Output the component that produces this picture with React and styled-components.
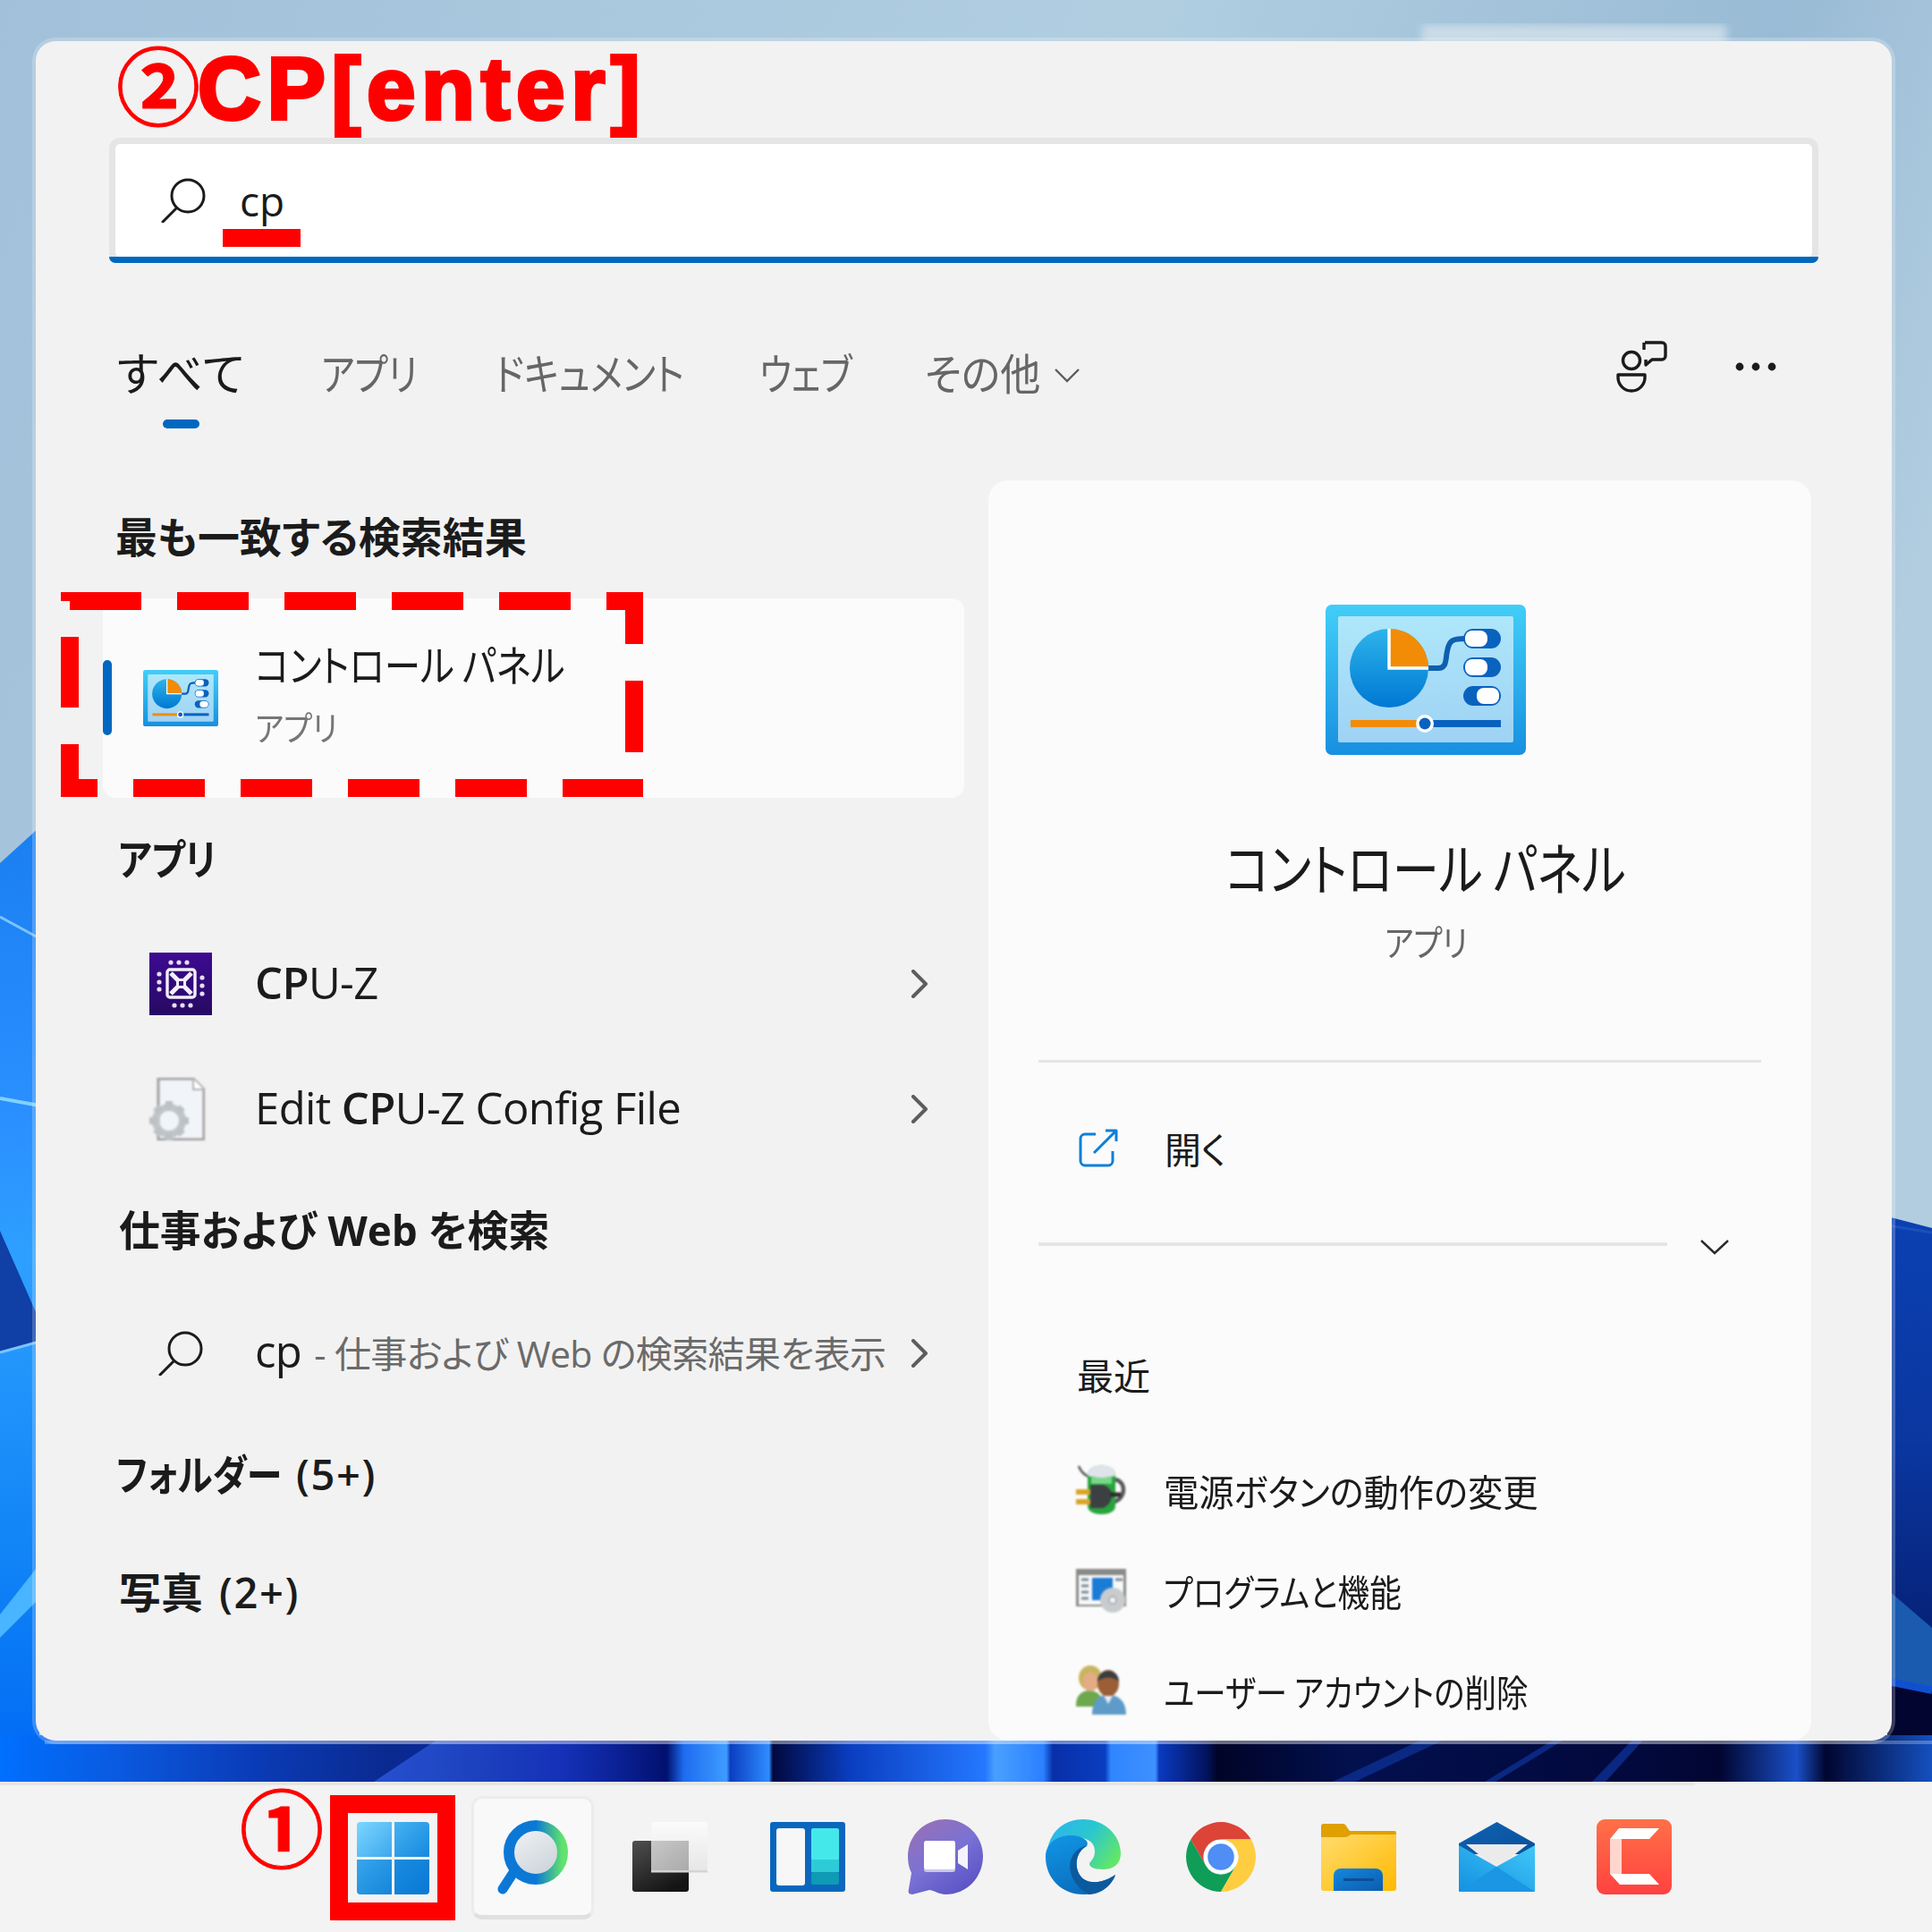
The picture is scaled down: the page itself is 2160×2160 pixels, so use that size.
import React from 'react';
import styled, { createGlobalStyle } from 'styled-components';

const sans = `"Open Sans", "Noto Sans CJK JP", sans-serif`;
const jp = `"Noto Sans CJK JP", sans-serif`;

const GlobalStyle = createGlobalStyle`
  html, body {
    margin: 0;
    padding: 0;
    background: #f3f3f3;
  }
  * {
    box-sizing: border-box;
  }
`;

const Desktop = styled.div`
  position: relative;
  width: 2160px;
  height: 2160px;
  overflow: hidden;
  font-family: ${sans};
  font-feature-settings: "palt";
  color: #1b1b1b;
`;

const WallpaperSvg = styled.svg`
  position: absolute;
  left: 0;
  top: 0;
`;

const Workspace = styled.div`
  position: relative;
  height: 1992px;
  padding: 46px 0 46px 40px;
`;

const Panel = styled.div`
  width: 2075px;
  height: 1900px;
  background: #f2f2f2;
  border-radius: 22px;
  box-shadow: 0 0 0 4px rgba(255, 255, 255, 0.22);
  display: flex;
  flex-direction: column;
`;

/* Yu Gothic UI kana are much narrower than Noto's, so labels get squeezed */
const Narrow = styled.span`
  display: inline-block;
  white-space: nowrap;
  width: ${(p) => (p.$w ? `${p.$w}px` : 'auto')};
  transform: scaleX(${(p) => p.$x});
  transform-origin: ${(p) => p.$origin || 'left'} center;
`;

const Instruction = styled.div`
  height: 108px;
  padding-left: 90px;
  line-height: 92px;
  color: #ff0000;
  white-space: nowrap;
  font-family: "Liberation Sans", ${jp};
  font-weight: 700;
  font-size: 98px;
  letter-spacing: 6.7px;
  -webkit-text-stroke: 4px #ff0000;
  font-feature-settings: normal;
`;

const Circled = styled.span`
  font-family: ${jp};
  font-size: 94px;
  letter-spacing: -3px;
  -webkit-text-stroke: 1px #ff0000;
`;

const SearchBox = styled.div`
  position: relative;
  margin-left: 82px;
  width: 1911px;
  height: 140px;
  flex: none;
  background: #fff;
  border: 7px solid #e5e5e5;
  border-bottom-color: transparent;
  background-clip: padding-box;
  border-radius: 12px;
  display: flex;
  align-items: center;
  padding-left: 51px;
  gap: 38px;

  &::after {
    content: '';
    position: absolute;
    left: -7px;
    right: -7px;
    bottom: -7px;
    height: 7px;
    background: #0067c0;
    border-radius: 0 0 8px 8px;
  }
`;

const QueryText = styled.span`
  font-size: 46px;
  line-height: 60px;
`;

const QueryMark = styled.div`
  position: absolute;
  left: 120px;
  top: 95px;
  width: 87px;
  height: 20px;
  background: #ff0000;
`;

const TabBar = styled.div`
  height: 243px;
  flex: none;
  padding: 90px 0 0 88px;
  display: flex;
  align-items: flex-start;
  gap: 85px;
`;

const Tab = styled.div`
  position: relative;
  width: ${(p) => p.$w}px;
  flex: none;
  font-family: ${jp};
  font-size: ${(p) => (p.$active ? 51 : 48)}px;
  line-height: 62px;
  font-weight: 400;
  font-feature-settings: ${(p) => (p.$active ? 'normal' : '"palt"')};
  color: ${(p) => (p.$active ? '#1b1b1b' : '#666666')};
  display: flex;
  align-items: center;
  white-space: nowrap;

  &::after {
    content: '';
    display: ${(p) => (p.$active ? 'block' : 'none')};
    position: absolute;
    left: 54px;
    top: 85px;
    width: 41px;
    height: 10px;
    border-radius: 5px;
    background: #0067c0;
  }
`;

const TabCaret = styled.span`
  display: flex;
  margin: 10px 0 0 20px;
`;

const TabTools = styled.div`
  margin-left: auto;
  margin-right: 129px;
  margin-top: -3px;
  display: flex;
  align-items: center;
  gap: 76px;
`;

const Columns = styled.div`
  flex: 1;
  min-height: 0;
  display: flex;
`;

const ResultsColumn = styled.div`
  width: 1065px;
  flex: none;
  padding-top: 18px;
`;

const SectionHeading = styled.div`
  height: 90px;
  margin-top: ${(p) => p.$top || 0}px;
  padding-left: ${(p) => p.$left || 90}px;
  font-size: 47px;
  line-height: 90px;
  font-weight: 700;
  color: #1b1b1b;
  white-space: nowrap;
`;

const Count = styled.span`
  margin-left: ${(p) => p.$gap}px;
  font-weight: 600;
  letter-spacing: 1.6px;
`;

const BestMatch = styled.div`
  position: relative;
  margin: 24px 0 0 75px;
  width: 963px;
  height: 223px;
  background: #fbfbfb;
  border-radius: 14px;
  display: flex;
  align-items: center;
`;

const Accent = styled.div`
  width: 10px;
  height: 84px;
  border-radius: 5px;
  background: #0067c0;
  margin-top: -1px;
`;

const BestIcon = styled.div`
  width: 84px;
  height: 63px;
  margin: 0 41px 0 35px;
  display: flex;
`;

const BestText = styled.div`
  display: flex;
  flex-direction: column;
  margin-top: -11px;
`;

const BestTitle = styled.div`
  font-family: ${jp};
  font-size: 48px;
  line-height: 66px;
  font-weight: 400;
  color: #1b1b1b;
  white-space: nowrap;
`;

const BestKind = styled.div`
  margin-top: 8px;
  font-family: ${jp};
  font-size: 38px;
  line-height: 60px;
  font-weight: 400;
  color: #767676;
`;

const DashedFrame = styled.svg`
  position: absolute;
  left: -47px;
  top: -7px;
`;

const RowList = styled.div`
  margin-top: ${(p) => p.$top || 0}px;
  display: flex;
  flex-direction: column;
`;

const ResultRow = styled.div`
  height: 140px;
  display: flex;
  align-items: center;
  padding-left: ${(p) => p.$indent || 127}px;
`;

const RowIcon = styled.div`
  width: ${(p) => p.$width || 118}px;
  flex: none;
  display: flex;
`;

const RowText = styled.div`
  width: 733px;
  flex: none;
  margin-top: -4px;
  font-size: 49px;
  line-height: 60px;
  font-weight: 400;
  letter-spacing: -0.6px;
  white-space: nowrap;
`;

const Match = styled.span`
  font-weight: 600;
`;

const Faded = styled.span`
  margin-left: 4px;
  font-size: 41px;
  font-weight: 400;
  color: #6a6a6a;
`;

const DetailColumn = styled.div`
  width: 920px;
  flex: none;
  background: #fbfbfb;
  border-radius: 22px;
  display: flex;
  flex-direction: column;
`;

const Hero = styled.div`
  margin-left: 58px;
  padding-top: 139px;
  display: flex;
  flex-direction: column;
  align-items: center;
`;

const HeroTitle = styled.div`
  margin-top: 84px;
  font-family: ${jp};
  font-size: 63px;
  line-height: 80px;
  font-weight: 400;
  white-space: nowrap;
`;

const HeroKind = styled.div`
  margin-top: 14px;
  font-family: ${jp};
  font-size: 40px;
  line-height: 60px;
  font-weight: 400;
  color: #666666;
`;

const Rule = styled.div`
  height: ${(p) => p.$h || 3}px;
  width: ${(p) => p.$width}px;
  margin-left: ${(p) => p.$left || 0}px;
  margin-top: ${(p) => p.$top || 0}px;
  background: #e5e5e5;
`;

const ActionRow = styled.div`
  height: 80px;
  margin-top: 55px;
  padding-left: 101px;
  display: flex;
  align-items: center;
  gap: 52px;
`;

const DetailText = styled.div`
  font-family: ${jp};
  font-size: 41px;
  line-height: 60px;
  font-weight: 400;
  white-space: nowrap;
`;

const ExpandRow = styled.div`
  height: 40px;
  margin-top: 48px;
  padding-left: 56px;
  display: flex;
  align-items: center;
  gap: 37px;
`;

const ExpandCaret = styled.span`
  display: flex;
  margin-top: 7px;
`;

const RecentLabel = styled.div`
  margin-top: 95px;
  padding-left: 99px;
`;

const RecentList = styled.div`
  margin-top: 44px;
  display: flex;
  flex-direction: column;
`;

const RecentRow = styled.div`
  height: 112px;
  padding-left: 98px;
  display: flex;
  align-items: center;
  gap: 42px;
`;

const SoftIcon = styled.svg`
  display: block;
  flex: none;
  filter: blur(${(p) => p.$blur || 0.6}px);
`;

const Taskbar = styled.div`
  position: relative;
  height: 168px;
  background: #f3f3f3;
  padding-left: 362px;
  display: flex;
  align-items: center;

  &::before {
    content: '';
    position: absolute;
    left: 0;
    top: 0;
    width: 1895px;
    height: 4px;
    background: #e6e6e6;
  }
`;

const TaskSlot = styled.div`
  position: relative;
  width: 154px;
  flex: none;
  display: flex;
  justify-content: center;
`;

const StartSlot = styled(TaskSlot)`
  width: 156px;
  justify-content: flex-start;
  padding-left: 7px;
`;

const StartFrame = styled.div`
  width: 140px;
  height: 140px;
  margin-top: 2px;
  border: 20px solid #ff0000;
  display: flex;
  align-items: center;
  justify-content: center;
`;

const StepOne = styled.div`
  position: absolute;
  left: -94px;
  top: -12px;
  color: #ff0000;
  font-family: ${jp};
  font-weight: 700;
  font-size: 94px;
  line-height: 94px;
  -webkit-text-stroke: 1px #ff0000;
`;

const SearchTile = styled.div`
  width: 137px;
  height: 138px;
  margin-top: 2px;
  background: #f9f9f9;
  border: 3px solid #ececec;
  border-bottom: 5px solid #e0e0e0;
  border-radius: 12px;
  display: flex;
  align-items: center;
  justify-content: center;
`;

function Wallpaper() {
  return (
    <WallpaperSvg width="2160" height="1992" viewBox="0 0 2160 1992">
      <defs>
        <linearGradient id="sky" x1="0" y1="0" x2="1" y2="0.3">
          <stop offset="0" stopColor="#a2c0d9" />
          <stop offset="0.55" stopColor="#b1cee1" />
          <stop offset="0.85" stopColor="#99bbd5" />
          <stop offset="1" stopColor="#b2cde0" />
        </linearGradient>
        <linearGradient id="bloomLeft" x1="0" y1="0" x2="0" y2="1">
          <stop offset="0" stopColor="#1a7ff0" />
          <stop offset="0.3" stopColor="#2a8fff" />
          <stop offset="0.45" stopColor="#2da0ff" />
          <stop offset="0.78" stopColor="#0f82f6" />
          <stop offset="1" stopColor="#0068f5" />
        </linearGradient>
        <linearGradient id="bloomRight" x1="0" y1="0" x2="0" y2="1">
          <stop offset="0" stopColor="#0b40b2" />
          <stop offset="0.4" stopColor="#0a37a0" />
          <stop offset="1" stopColor="#031058" />
        </linearGradient>
        <linearGradient id="floor" x1="0" y1="0" x2="1" y2="0">
          <stop offset="0" stopColor="#0070ff" />
          <stop offset="0.06" stopColor="#0a5ae0" />
          <stop offset="0.13" stopColor="#0a3cb8" />
          <stop offset="0.2" stopColor="#0a2a90" />
          <stop offset="0.29" stopColor="#0a20a8" />
          <stop offset="0.345" stopColor="#01106e" />
          <stop offset="0.354" stopColor="#1d6cf0" />
          <stop offset="0.376" stopColor="#3f9cff" />
          <stop offset="0.378" stopColor="#0a3ec0" />
          <stop offset="0.398" stopColor="#2f8cff" />
          <stop offset="0.4" stopColor="#01083f" />
          <stop offset="0.44" stopColor="#0a3ec0" />
          <stop offset="0.51" stopColor="#2478ff" />
          <stop offset="0.515" stopColor="#4aa0ff" />
          <stop offset="0.54" stopColor="#2a80ff" />
          <stop offset="0.545" stopColor="#082fa8" />
          <stop offset="0.572" stopColor="#0a3ec0" />
          <stop offset="0.575" stopColor="#2f86ff" />
          <stop offset="0.598" stopColor="#3f90ff" />
          <stop offset="0.6" stopColor="#0a3ac0" />
          <stop offset="0.625" stopColor="#02125c" />
          <stop offset="0.63" stopColor="#010428" />
          <stop offset="0.7" stopColor="#02104e" />
          <stop offset="0.86" stopColor="#02083a" />
          <stop offset="0.89" stopColor="#010530" />
          <stop offset="0.93" stopColor="#1a50c8" />
          <stop offset="0.945" stopColor="#010530" />
          <stop offset="1" stopColor="#1450c0" />
        </linearGradient>
        <linearGradient id="floorFold" x1="0" y1="0" x2="1" y2="0">
          <stop offset="0" stopColor="#2a55d8" stopOpacity="0.9" />
          <stop offset="1" stopColor="#2a55d8" stopOpacity="0" />
        </linearGradient>
        <filter id="soft">
          <feGaussianBlur stdDeviation="5" />
        </filter>
      </defs>
      <rect width="2160" height="1992" fill="url(#sky)" />
      <rect x="1590" y="28" width="340" height="20" fill="#d8e4ec" opacity="0.75" filter="url(#soft)" />

      <path d="M0 965 L44 925 V1992 H0 Z" fill="url(#bloomLeft)" />
      <path d="M0 1025 L44 1049" stroke="#7cc4ff" strokeWidth="3" fill="none" />
      <path d="M0 1228 L44 1236" stroke="#80d2ff" strokeWidth="4" fill="none" />
      <path d="M0 1376 L44 1476 V1500 L0 1511 Z" fill="#103fa6" />
      <path d="M0 1512 L44 1500" stroke="#7cc4ff" strokeWidth="3" fill="none" />
      <path d="M0 1805 L44 1749 V1787 L0 1831 Z" fill="#49b4ff" />

      <path d="M2110 1360 L2160 1373 V1992 H2110 Z" fill="url(#bloomRight)" />
      <path d="M2110 1777 L2160 1820 V1886 L2110 1880 Z" fill="#1a5bb0" />
      <path d="M2110 1880 L2160 1890" stroke="#1050d0" strokeWidth="9" fill="none" />
      <path d="M2110 1884 L2160 1894 V1992 H2110 Z" fill="#010530" />
      <path d="M2110 1370 L2160 1378" stroke="#2a62c4" strokeWidth="3" fill="none" opacity="0.5" />

      <rect y="1940" width="2160" height="52" fill="url(#floor)" />
      <path d="M418 1992 L496 1940 H745 V1992 Z" fill="url(#floorFold)" />
      <path d="M1490 1992 L1600 1940 H1625 L1515 1992 Z" fill="#0d2f92" opacity="0.8" />
      <path d="M1660 1992 L1745 1940 H1757 L1672 1992 Z" fill="#0d2f92" opacity="0.8" />
      <path d="M1780 1992 L1830 1940 H1842 L1795 1992 Z" fill="#0d2f92" opacity="0.8" />
      <rect x="50" y="1946" width="2110" height="4" fill="#ffffff" opacity="0.26" />
    </WallpaperSvg>
  );
}

function SearchGlyph({ size = 50 }) {
  return (
    <svg width={size} height={size} viewBox="0 0 50 50" fill="none" stroke="#1b1b1b" strokeWidth="3">
      <circle cx="30" cy="20" r="18" />
      <path d="M17 34 L2 49" strokeLinecap="round" />
    </svg>
  );
}

function PeopleFeedback() {
  return (
    <svg width="57" height="58" viewBox="0 0 57 58" fill="none" stroke="#1b1b1b" strokeWidth="3.4">
      <circle cx="17" cy="22" r="9.5" />
      <path d="M2 38 H32 V41 A15 15 0 0 1 2 41 Z" strokeLinejoin="round" />
      <path d="M32 2 H51 A4 4 0 0 1 55 6 V17 A4 4 0 0 1 51 21 H40 L33 27 V21" strokeLinejoin="round" />
      <path d="M31 2 V10" />
    </svg>
  );
}

function MoreDots() {
  return (
    <svg width="46" height="10" viewBox="0 0 46 10" fill="#1b1b1b">
      <circle cx="5" cy="5" r="4.4" />
      <circle cx="23" cy="5" r="4.4" />
      <circle cx="41" cy="5" r="4.4" />
    </svg>
  );
}

function ChevronDown({ width, height, color, strokeWidth = 2.4 }) {
  return (
    <svg width={width} height={height} viewBox={`0 0 ${width} ${height}`} fill="none" stroke={color} strokeWidth={strokeWidth}>
      <path d={`M1 1 L${width / 2} ${height - 2} L${width - 1} 1`} />
    </svg>
  );
}

function ChevronRight() {
  return (
    <svg width="20" height="32" viewBox="0 0 20 32" fill="none" stroke="#5d5d5d" strokeWidth="4" strokeLinecap="round" strokeLinejoin="round">
      <path d="M3 2 L17 16 L3 30" />
    </svg>
  );
}

function Pill({ y, inner }) {
  return (
    <g>
      <rect x="154" y={y} width="42" height="22" rx="11" fill="#0a62bf" />
      <rect x={inner} y={y + 2} width="25" height="18" rx="8" fill="#fff" />
    </g>
  );
}

function ControlPanelIcon({ width, height, id }) {
  return (
    <svg width={width} height={height} viewBox="0 0 224 168">
      <defs>
        <linearGradient id={`${id}frame`} x1="0" y1="0" x2="0" y2="1">
          <stop offset="0" stopColor="#42cef8" />
          <stop offset="1" stopColor="#1790e0" />
        </linearGradient>
        <linearGradient id={`${id}pane`} x1="0" y1="0" x2="0" y2="1">
          <stop offset="0" stopColor="#aee7fa" />
          <stop offset="1" stopColor="#9fd2f4" />
        </linearGradient>
        <linearGradient id={`${id}pie`} x1="0" y1="0" x2="0" y2="1">
          <stop offset="0" stopColor="#2db4ea" />
          <stop offset="1" stopColor="#0078d4" />
        </linearGradient>
      </defs>
      <rect width="224" height="168" rx="7" fill={`url(#${id}frame)`} />
      <rect x="14" y="13" width="196" height="141" rx="2" fill={`url(#${id}pane)`} />
      <circle cx="71" cy="71" r="44" fill={`url(#${id}pie)`} />
      <path d="M71 27 A44 44 0 0 1 115 71 H71 Z" fill="#f28c06" />
      <path d="M71 27 V71 H115" fill="none" stroke="#fff" strokeWidth="3.5" />
      <path d="M115 71 H126 C136 71 134 60 136 52 C138 40 142 38 156 38" fill="none" stroke="#0f5fb0" strokeWidth="6" />
      <Pill y={27} inner={156} />
      <Pill y={59} inner={156} />
      <Pill y={91} inner={169} />
      <rect x="28" y="129" width="78" height="8" fill="#f28c06" />
      <rect x="118" y="129" width="78" height="8" fill="#0a62bf" />
      <circle cx="111" cy="133" r="10" fill="#fff" />
      <circle cx="111" cy="133" r="6.5" fill="#0a62bf" />
    </svg>
  );
}

function CpuZIcon() {
  return (
    <SoftIcon width="70" height="70" viewBox="0 0 70 70">
      <defs>
        <linearGradient id="cpuBg" x1="0" y1="0" x2="0" y2="1">
          <stop offset="0" stopColor="#3d0a92" />
          <stop offset="1" stopColor="#260a62" />
        </linearGradient>
      </defs>
      <rect width="70" height="70" fill="url(#cpuBg)" />
      <g fill="#e8def5">
        {[24, 33, 42].map((x) => <circle key={`t${x}`} cx={x} cy="11" r="2.6" />)}
        {[28, 37, 46].map((x) => <circle key={`b${x}`} cx={x} cy="59" r="2.6" />)}
        {[24, 33, 41].map((y) => <circle key={`l${y}`} cx="11" cy={y} r="2.6" />)}
        {[28, 37, 46].map((y) => <circle key={`r${y}`} cx="59" cy={y} r="2.6" />)}
      </g>
      <rect x="20" y="19" width="31" height="31" rx="3" fill="none" stroke="#f4effa" strokeWidth="3.4" />
      <path d="M24 23 L47 46 M47 23 L24 46" stroke="#f4effa" strokeWidth="5" />
      <rect x="30" y="29" width="11" height="11" fill="#f4effa" />
      <rect x="33" y="32" width="5" height="5" fill="#3a0d88" />
    </SoftIcon>
  );
}

function ConfigFileIcon() {
  return (
    <SoftIcon width="62" height="70" viewBox="0 0 62 70" $blur={0.9}>
      <path d="M10 1 H49 L61 13 V69 H10 Z" fill="#f1f4f9" stroke="#a0a0a0" strokeWidth="3" />
      <path d="M49 1 V13 H61" fill="#fff" stroke="#b4b4b4" strokeWidth="2" />
      <circle cx="22" cy="48" r="15" fill="none" stroke="#c0c5ca" strokeWidth="8" />
      <path d="M22 26 V34 M22 62 V70 M0 48 H8 M36 48 H44 M7 33 L12 38 M32 58 L37 63 M37 33 L32 38 M12 58 L7 63" stroke="#bcc1c6" strokeWidth="8" />
      <circle cx="22" cy="48" r="7" fill="#f1f4f9" />
    </SoftIcon>
  );
}

function OpenIcon() {
  return (
    <svg width="44" height="43" viewBox="0 0 44 43" fill="none" stroke="#0f7fd8" strokeWidth="3" strokeLinejoin="round">
      <path d="M19 6 H7 A5 5 0 0 0 2 11 V36 A5 5 0 0 0 7 41 H33 A5 5 0 0 0 38 36 V25" />
      <path d="M17 27 L42 2 M30 2 H42 V14" />
    </svg>
  );
}

function PowerIcon() {
  return (
    <SoftIcon width="56" height="56" viewBox="0 0 56 56" $blur={0.8}>
      <path d="M3 1 C5 7 8 10 14 13" fill="none" stroke="#555" strokeWidth="2.4" />
      <path d="M42 16 C56 16 58 38 40 42" fill="none" stroke="#56595c" strokeWidth="4.5" />
      <path d="M13 11 C13 -3 44 -3 44 11 V46 C44 58 13 58 13 46 Z" fill="#27a53c" />
      <path d="M13 11 C13 -3 44 -3 44 11 C44 15 13 15 13 11 Z" fill="#dfe3ea" />
      <path d="M17 14 H40 V21 H17 Z" fill="#79d886" />
      <rect x="0" y="27" width="18" height="6" fill="#d8a526" />
      <rect x="0" y="38" width="18" height="6" fill="#d8a526" />
      <path d="M16 22 H30 C36 24 40 28 40 33 C40 40 36 46 30 48 H16 Z" fill="#3c4043" />
      <path d="M38 33 L50 33" stroke="#2a2c2e" strokeWidth="5" />
    </SoftIcon>
  );
}

function ProgramsIcon() {
  return (
    <SoftIcon width="56" height="50" viewBox="0 0 56 50" $blur={0.8}>
      <rect y="1" width="56" height="42" fill="#8a8a88" />
      <rect x="3" y="8" width="50" height="33" fill="#f6f8fa" />
      <rect x="18" y="11" width="23" height="25" fill="#1b7cd6" />
      <path d="M6 13 H14 M6 20 H14 M6 27 H14 M6 34 H14 M44 13 H52" stroke="#7e8a94" strokeWidth="3" />
      <circle cx="41" cy="36" r="14" fill="#c9cccf" />
      <circle cx="41" cy="36" r="4" fill="#f2f2f2" stroke="#a0a4a8" strokeWidth="1.5" />
    </SoftIcon>
  );
}

function UsersIcon() {
  return (
    <SoftIcon width="56" height="56" viewBox="0 0 56 56" $blur={0.9}>
      <path d="M0 44 C0 32 8 28 15 28 C23 28 30 33 30 44 V46 H0 Z" fill="#6ea84e" />
      <ellipse cx="16" cy="14" rx="13" ry="14" fill="#c9b45e" />
      <ellipse cx="16" cy="18" rx="8.5" ry="11" fill="#e3ac85" />
      <path d="M18 55 C18 38 26 33 36 33 C48 33 56 40 56 55 Z" fill="#5f9bc9" />
      <ellipse cx="36" cy="20" rx="12" ry="15" fill="#9a5f36" />
      <path d="M24 18 C24 2 48 2 48 18 C42 12 30 12 24 18 Z" fill="#3a3d40" />
      <path d="M31 34 L36 43 L41 34 Z" fill="#e8eef2" />
    </SoftIcon>
  );
}

function WindowsLogo() {
  return (
    <svg width="81" height="81" viewBox="0 0 81 81">
      <defs>
        <linearGradient id="winA" x1="0" y1="0" x2="1" y2="1">
          <stop offset="0" stopColor="#7dd6ff" />
          <stop offset="1" stopColor="#3ca8ee" />
        </linearGradient>
        <linearGradient id="winB" x1="0" y1="0" x2="1" y2="1">
          <stop offset="0" stopColor="#45b2f2" />
          <stop offset="1" stopColor="#1689de" />
        </linearGradient>
        <linearGradient id="winC" x1="0" y1="0" x2="1" y2="1">
          <stop offset="0" stopColor="#38a6ec" />
          <stop offset="1" stopColor="#1485da" />
        </linearGradient>
        <linearGradient id="winD" x1="0" y1="0" x2="1" y2="1">
          <stop offset="0" stopColor="#1b8ce0" />
          <stop offset="1" stopColor="#0878d4" />
        </linearGradient>
      </defs>
      <path d="M4 0 H39 V39 H0 V4 A4 4 0 0 1 4 0 Z" fill="url(#winA)" />
      <path d="M42 0 H77 A4 4 0 0 1 81 4 V39 H42 Z" fill="url(#winB)" />
      <path d="M0 42 H39 V81 H4 A4 4 0 0 1 0 77 Z" fill="url(#winC)" />
      <path d="M42 42 H81 V77 A4 4 0 0 1 77 81 H42 Z" fill="url(#winD)" />
    </svg>
  );
}

function TaskSearchIcon() {
  return (
    <svg width="80" height="84" viewBox="0 0 80 84">
      <defs>
        <linearGradient id="lensRing" x1="0" y1="0" x2="1" y2="0">
          <stop offset="0.5" stopColor="#0b78d6" />
          <stop offset="1" stopColor="#62e36c" />
        </linearGradient>
        <linearGradient id="lensGlass" x1="0" y1="0" x2="0.6" y2="1">
          <stop offset="0" stopColor="#f4f6f8" />
          <stop offset="1" stopColor="#ccd3d9" />
        </linearGradient>
      </defs>
      <path d="M20 58 L7 78" stroke="#0b78d6" strokeWidth="11" strokeLinecap="round" />
      <circle cx="44" cy="37" r="30" fill="url(#lensGlass)" stroke="url(#lensRing)" strokeWidth="12" />
    </svg>
  );
}

function TaskViewIcon() {
  return (
    <svg width="84" height="78" viewBox="0 0 84 78">
      <defs>
        <linearGradient id="tvDark" x1="0" y1="0" x2="0.6" y2="1">
          <stop offset="0" stopColor="#505050" />
          <stop offset="1" stopColor="#141414" />
        </linearGradient>
        <linearGradient id="tvLight" x1="0" y1="0" x2="0" y2="1">
          <stop offset="0" stopColor="#fbfbfb" />
          <stop offset="1" stopColor="#e6e6e6" />
        </linearGradient>
        <linearGradient id="tvMid" x1="0" y1="0" x2="1" y2="1">
          <stop offset="0" stopColor="#c8c8c8" />
          <stop offset="1" stopColor="#aaaaaa" />
        </linearGradient>
      </defs>
      <rect y="21" width="63" height="57" rx="3" fill="url(#tvDark)" />
      <rect x="21" width="63" height="56" rx="2" fill="url(#tvLight)" />
      <path d="M21 21 H63 V54 H21 Z" fill="url(#tvMid)" />
      <rect x="21" y="54" width="63" height="2.5" fill="#d4d4d4" />
    </svg>
  );
}

function WidgetsIcon() {
  return (
    <svg width="84" height="78" viewBox="0 0 84 78">
      <rect width="84" height="78" rx="3" fill="#0a67bd" />
      <rect x="7" y="7" width="32" height="64" rx="3" fill="#f7f7f7" />
      <rect x="46" y="7" width="31" height="36" rx="2" fill="#45e8ea" />
      <rect x="46" y="42" width="31" height="14" fill="#2dcbd8" />
      <rect x="46" y="56" width="31" height="14" rx="2" fill="#0f9ab5" />
    </svg>
  );
}

function ChatIcon() {
  return (
    <svg width="84" height="84" viewBox="0 0 84 84">
      <defs>
        <linearGradient id="chatBg" x1="0.1" y1="0" x2="0.8" y2="1">
          <stop offset="0" stopColor="#9a70b4" />
          <stop offset="0.5" stopColor="#7a72d4" />
          <stop offset="1" stopColor="#5750c4" />
        </linearGradient>
      </defs>
      <path d="M42 0 C65 0 84 18 84 41 C84 65 66 84 42 84 C35 84 31 80 24 79 L5 84 C1 84 0 82 1 78 L4 60 C1 54 0 48 0 41 C0 18 19 0 42 0 Z" fill="url(#chatBg)" />
      <rect x="18" y="24" width="35" height="35" rx="3" fill="#c9c6ea" />
      <rect x="18" y="24" width="35" height="32" rx="3" fill="#fff" />
      <path d="M56 35 L67 28 V56 L56 49 Z" fill="#f4f4fb" strokeLinejoin="round" />
    </svg>
  );
}

function EdgeIcon() {
  return (
    <svg width="84" height="84" viewBox="0 0 84 84">
      <defs>
        <linearGradient id="edgeTop" x1="0" y1="0.2" x2="1" y2="0.7">
          <stop offset="0" stopColor="#2cb5ee" />
          <stop offset="0.5" stopColor="#2ac7cf" />
          <stop offset="1" stopColor="#63e765" />
        </linearGradient>
        <linearGradient id="edgeBase" x1="0.2" y1="0.1" x2="0.6" y2="1">
          <stop offset="0" stopColor="#1090e0" />
          <stop offset="1" stopColor="#0a6bbb" />
        </linearGradient>
      </defs>
      <path d="M2 34 C6 12 22 0 42 0 C66 0 84 18 84 38 C84 50 76 56 64 56 C54 56 49 53 49 50 C49 47 55 45 55 36 C55 24 45 20 30 20 C18 20 6 24 2 34 Z" fill="url(#edgeTop)" />
      <path d="M0 42 C0 26 14 18 28 18 C40 18 50 24 46 30 C34 36 32 52 38 62 C44 72 60 74 78 62 C74 74 60 84 42 84 C18 84 0 66 0 42 Z" fill="url(#edgeBase)" />
      <path d="M46 30 C34 36 32 52 38 62 C44 72 60 74 78 62 C74 74 62 84 48 84 C36 78 24 62 28 46 C31 36 38 31 46 30 Z" fill="#0c5a9e" />
    </svg>
  );
}

function ChromeIcon() {
  return (
    <svg width="78" height="78" viewBox="4 4 40 40">
      <path d="M6.7 14 A20 20 0 0 1 41.3 14 H24 A10 10 0 0 0 15.3 29 Z" fill="#db4437" />
      <path d="M6.7 14 A20 20 0 0 0 24 44 L32.7 29 A10 10 0 0 1 15.3 29 Z" fill="#0f9d58" />
      <path d="M41.3 14 H24 A10 10 0 0 1 32.7 29 L24 44 A20 20 0 0 0 41.3 14 Z" fill="#ffcd40" />
      <circle cx="24" cy="24" r="9.6" fill="#fff" />
      <circle cx="24" cy="24" r="7.6" fill="#4f8ef5" />
    </svg>
  );
}

function FolderIcon() {
  return (
    <svg width="84" height="75" viewBox="0 0 84 75">
      <defs>
        <linearGradient id="folderFront" x1="0" y1="0" x2="1" y2="1">
          <stop offset="0" stopColor="#ffdc6e" />
          <stop offset="1" stopColor="#ffb900" />
        </linearGradient>
        <linearGradient id="folderTab" x1="0" y1="0" x2="1" y2="1">
          <stop offset="0" stopColor="#1588dc" />
          <stop offset="1" stopColor="#0a5cb0" />
        </linearGradient>
      </defs>
      <path d="M3 0 H24 C27 0 28 2 29 4 L32 8 H82 A2 2 0 0 1 84 10 V20 H0 V3 A3 3 0 0 1 3 0 Z" fill="#e0a000" />
      <path d="M0 15 H26 C29 15 31 14 33 12 H84 V72 A3 3 0 0 1 81 75 H3 A3 3 0 0 1 0 72 Z" fill="url(#folderFront)" />
      <path d="M22 50 H61 A8 8 0 0 1 69 58 V75 H14 V58 A8 8 0 0 1 22 50 Z" fill="url(#folderTab)" />
      <rect x="25" y="61" width="34" height="3" fill="#0b4f96" />
    </svg>
  );
}

function MailIcon() {
  return (
    <svg width="85" height="78" viewBox="0 0 85 78">
      <defs>
        <linearGradient id="mailFlap" x1="0" y1="0" x2="1" y2="1">
          <stop offset="0" stopColor="#0e63b4" />
          <stop offset="1" stopColor="#0a4f9a" />
        </linearGradient>
        <linearGradient id="mailBody" x1="1" y1="0" x2="0" y2="1">
          <stop offset="0" stopColor="#41c8f8" />
          <stop offset="1" stopColor="#1390e0" />
        </linearGradient>
      </defs>
      <path d="M42.5 0 L85 24 V36 H0 V24 Z" fill="url(#mailFlap)" />
      <path d="M8 25 H77 L42 52 Z" fill="#ebebeb" />
      <path d="M0 26 L42 50 L85 26 V77 A1 1 0 0 1 84 78 H1 A1 1 0 0 1 0 77 Z" fill="url(#mailBody)" />
      <path d="M0 78 L42 50 L85 78 Z" fill="#1a96e4" />
    </svg>
  );
}

function CamtasiaIcon() {
  return (
    <svg width="84" height="84" viewBox="0 0 84 84">
      <defs>
        <linearGradient id="camBg" x1="0" y1="0" x2="0" y2="1">
          <stop offset="0" stopColor="#ff7048" />
          <stop offset="1" stopColor="#ff4240" />
        </linearGradient>
      </defs>
      <rect width="84" height="84" rx="9" fill="url(#camBg)" />
      <path d="M15 22 H28 V61 H15 Z" fill="#ffd6cd" />
      <path d="M15 22 L25 10 H70 L59 22 Z" fill="#fff" />
      <path d="M15 61 L26 73 H70 L59 61 Z" fill="#fff" />
    </svg>
  );
}

function DashedMarks() {
  const red = '#ff0000';
  const top = [[10, 80], [130, 80], [250, 80], [370, 80], [490, 80], [610, 41]];
  const bottom = [[0, 41], [81, 80], [201, 80], [321, 80], [441, 80], [561, 90]];
  const left = [[50, 79], [170, 59]];
  const right = [[20, 38], [99, 80]];
  return (
    <DashedFrame width="651" height="229" viewBox="0 0 651 229">
      <rect x="0" y="0" width="14" height="10" fill={red} />
      {top.map(([x, w]) => <rect key={`t${x}`} x={x} y="0" width={w} height="20" fill={red} />)}
      {bottom.map(([x, w]) => <rect key={`b${x}`} x={x} y="209" width={w} height="20" fill={red} />)}
      {left.map(([y, h]) => <rect key={`l${y}`} x="0" y={y} width="20" height={h} fill={red} />)}
      {right.map(([y, h]) => <rect key={`r${y}`} x="631" y={y} width="20" height={h} fill={red} />)}
    </DashedFrame>
  );
}

const tabs = [
  { label: 'アプリ', w: 109, x: 0.84 },
  { label: 'ドキュメント', w: 211, x: 0.865 },
  { label: 'ウェブ', w: 100, x: 0.83 },
];

const recentItems = [
  { label: '電源ボタンの動作の変更', x: 0.958, Icon: PowerIcon },
  { label: 'プログラムと機能', x: 0.87, Icon: ProgramsIcon },
  { label: 'ユーザー アカウントの削除', x: 0.865, Icon: UsersIcon },
];

const taskIcons = [TaskViewIcon, WidgetsIcon, ChatIcon, EdgeIcon, ChromeIcon, FolderIcon, MailIcon, CamtasiaIcon];

export default function App() {
  return (
    <Desktop>
      <GlobalStyle />
      <Wallpaper />
      <Workspace>
        <Panel>
          <Instruction><Circled>②</Circled>CP[enter]</Instruction>
          <SearchBox>
            <SearchGlyph />
            <QueryText>cp</QueryText>
            <QueryMark />
          </SearchBox>
          <TabBar>
            <Tab $active $w={146}>すべて</Tab>
            {tabs.map((tab) => (
              <Tab key={tab.label} $w={tab.w}>
                <Narrow $x={tab.x}>{tab.label}</Narrow>
              </Tab>
            ))}
            <Tab $w={173}>
              <Narrow $w={125} $x={0.94}>その他</Narrow>
              <TabCaret>
                <ChevronDown width={28} height={16} color="#5d5d5d" />
              </TabCaret>
            </Tab>
            <TabTools>
              <PeopleFeedback />
              <MoreDots />
            </TabTools>
          </TabBar>
          <Columns>
            <ResultsColumn>
              <SectionHeading $left={89}>最も一致する検索結果</SectionHeading>
              <BestMatch>
                <Accent />
                <BestIcon>
                  <ControlPanelIcon width={84} height={63} id="small" />
                </BestIcon>
                <BestText>
                  <BestTitle><Narrow $x={0.843}>コントロール パネル</Narrow></BestTitle>
                  <BestKind><Narrow $x={0.91}>アプリ</Narrow></BestKind>
                </BestText>
                <DashedMarks />
              </BestMatch>
              <SectionHeading $top={23} $left={92}><Narrow $x={0.857}>アプリ</Narrow></SectionHeading>
              <RowList $top={25}>
                <ResultRow>
                  <RowIcon><CpuZIcon /></RowIcon>
                  <RowText><Match>CP</Match>U-Z</RowText>
                  <ChevronRight />
                </ResultRow>
                <ResultRow>
                  <RowIcon><ConfigFileIcon /></RowIcon>
                  <RowText>Edit <Match>CP</Match>U-Z Config File</RowText>
                  <ChevronRight />
                </ResultRow>
              </RowList>
              <SectionHeading $top={20} $left={93}><Narrow $x={0.975}>仕事および Web を検索</Narrow></SectionHeading>
              <RowList $top={23}>
                <ResultRow $indent={137}>
                  <RowIcon $width={108}><SearchGlyph /></RowIcon>
                  <RowText>cp<Faded> - 仕事および Web の検索結果を表示</Faded></RowText>
                  <ChevronRight />
                </ResultRow>
              </RowList>
              <SectionHeading $top={20}>
                <Narrow $w={182} $x={0.85}>フォルダー</Narrow>
                <Count $gap={19}>(5+)</Count>
              </SectionHeading>
              <SectionHeading $top={42} $left={93}>
                写真<Count $gap={18}>(2+)</Count>
              </SectionHeading>
            </ResultsColumn>
            <DetailColumn>
              <Hero>
                <ControlPanelIcon width={224} height={168} id="large" />
                <HeroTitle><Narrow $x={0.83} $origin="center">コントロール パネル</Narrow></HeroTitle>
                <HeroKind><Narrow $x={0.87} $origin="center">アプリ</Narrow></HeroKind>
              </Hero>
              <Rule $width={808} $left={56} $top={103} />
              <ActionRow>
                <OpenIcon />
                <DetailText>開く</DetailText>
              </ActionRow>
              <ExpandRow>
                <Rule $width={703} $h={4} />
                <ExpandCaret>
                  <ChevronDown width={32} height={17} color="#2b2b2b" />
                </ExpandCaret>
              </ExpandRow>
              <RecentLabel>
                <DetailText>最近</DetailText>
              </RecentLabel>
              <RecentList>
                {recentItems.map(({ label, x, Icon }) => (
                  <RecentRow key={label}>
                    <Icon />
                    <DetailText><Narrow $x={x}>{label}</Narrow></DetailText>
                  </RecentRow>
                ))}
              </RecentList>
            </DetailColumn>
          </Columns>
        </Panel>
      </Workspace>
      <Taskbar>
        <StartSlot>
          <StartFrame>
            <WindowsLogo />
          </StartFrame>
          <StepOne>①</StepOne>
        </StartSlot>
        <TaskSlot>
          <SearchTile>
            <TaskSearchIcon />
          </SearchTile>
        </TaskSlot>
        {taskIcons.map((Icon) => (
          <TaskSlot key={Icon.name}>
            <Icon />
          </TaskSlot>
        ))}
      </Taskbar>
    </Desktop>
  );
}
